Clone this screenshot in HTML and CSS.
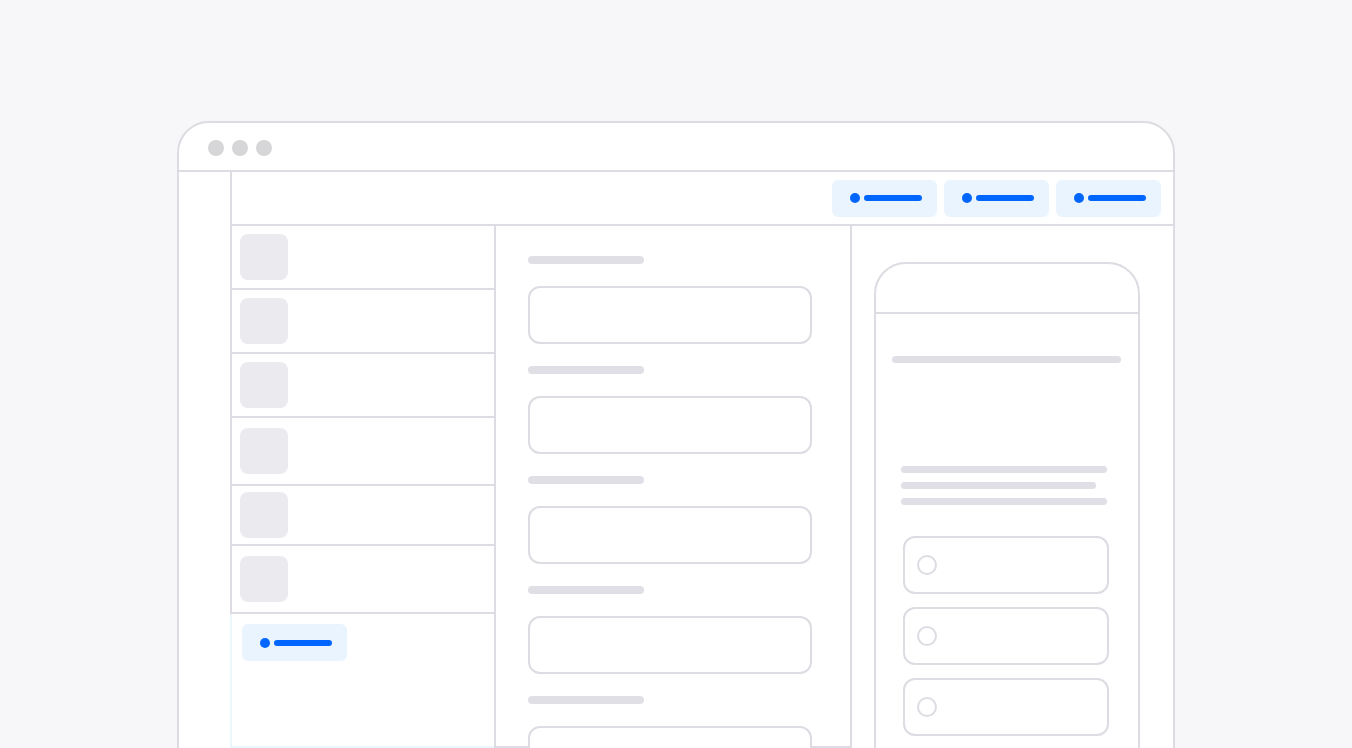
FILE: index.html
```html
<!DOCTYPE html>
<html lang="en">
<head>
  <meta charset="UTF-8" />
  <meta name="viewport" content="width=device-width, initial-scale=1.0"/>
  <title>Builder Wireframe</title>
  <link rel="stylesheet" href="styles.css">
</head>
<body>

  <div class="window">
    <div class="titlebar">
      <span class="light"></span>
      <span class="light"></span>
      <span class="light"></span>
    </div>

    <div class="window-body">
      <aside class="rail"></aside>

      <div class="workspace">
        <header class="toolbar">
          <span class="chip"><i class="chip-dot"></i><i class="chip-line"></i></span>
          <span class="chip"><i class="chip-dot"></i><i class="chip-line"></i></span>
          <span class="chip"><i class="chip-dot"></i><i class="chip-line"></i></span>
        </header>

        <div class="columns">
          <section class="list">
            <div class="row"><span class="thumb"></span></div>
            <div class="row"><span class="thumb"></span></div>
            <div class="row"><span class="thumb"></span></div>
            <div class="row row-tall"><span class="thumb"></span></div>
            <div class="row row-short"><span class="thumb"></span></div>
            <div class="row row-tall"><span class="thumb"></span></div>
            <div class="list-footer">
              <span class="chip"><i class="chip-dot"></i><i class="chip-line"></i></span>
            </div>
          </section>

          <section class="form">
            <div class="field"><span class="field-label"></span><span class="field-input"></span></div>
            <div class="field"><span class="field-label"></span><span class="field-input"></span></div>
            <div class="field"><span class="field-label"></span><span class="field-input"></span></div>
            <div class="field"><span class="field-label"></span><span class="field-input"></span></div>
            <div class="field"><span class="field-label"></span><span class="field-input"></span></div>
          </section>

          <section class="preview">
            <div class="phone">
              <div class="phone-header"></div>
              <div class="phone-body">
                <span class="phone-title"></span>
                <div class="phone-text">
                  <span class="text-line"></span>
                  <span class="text-line short"></span>
                  <span class="text-line"></span>
                </div>
                <div class="options">
                  <div class="option"><span class="radio"></span></div>
                  <div class="option"><span class="radio"></span></div>
                  <div class="option"><span class="radio"></span></div>
                </div>
              </div>
            </div>
          </section>
        </div>
      </div>
    </div>
  </div>

</body>
</html>
```

FILE: styles.css
```css
:root {
  --page: #f7f7f9;
  --line: #dcdce2;
  --soft-line: #ecf7fc;
  --fill: #ebebef;
  --bar: #dfdfe5;
  --blue: #0066ff;
  --blue-light: #eaf4ff;
  --light: #d6d6d8;
}

* {
  box-sizing: border-box;
  margin: 0;
  padding: 0;
}

html,
body {
  overflow: hidden;
}

body {
  font-family: 'Inter', sans-serif;
  background-color: var(--page);
  padding-top: 121px;
}

.window {
  width: 998px;
  margin: 0 auto;
  background-color: white;
  border: 2px solid var(--line);
  border-radius: 32px 32px 0 0;
}

/* title bar with the three window lights */
.titlebar {
  display: flex;
  gap: 8px;
  height: 49px;
  padding: 17px 0 0 29px;
  border-bottom: 2px solid var(--line);
}

.light {
  width: 16px;
  height: 16px;
  border-radius: 50%;
  background-color: var(--light);
}

.window-body {
  display: flex;
}

.rail {
  width: 51px;
  flex-shrink: 0;
}

.workspace {
  flex: 1;
}

.toolbar {
  display: flex;
  justify-content: flex-end;
  align-items: center;
  gap: 7px;
  height: 54px;
  padding-right: 12px;
  border-left: 2px solid var(--line);
  border-bottom: 2px solid var(--line);
}

.chip {
  display: flex;
  align-items: center;
  gap: 4px;
  width: 105px;
  height: 37px;
  padding-left: 18px;
  border-radius: 6px;
  background-color: var(--blue-light);
}

.chip-dot {
  width: 10px;
  height: 10px;
  border-radius: 50%;
  background-color: var(--blue);
}

.chip-line {
  width: 58px;
  height: 6px;
  border-radius: 3px;
  background-color: var(--blue);
}

.columns {
  display: flex;
  height: 522px;
}

/* left list of items */
.list {
  display: flex;
  flex-direction: column;
  width: 266px;
  border-right: 2px solid var(--line);
}

.row {
  display: flex;
  align-items: center;
  height: 64px;
  padding-left: 8px;
  border-left: 2px solid var(--line);
  border-bottom: 2px solid var(--line);
}

.row-tall {
  height: 68px;
}

.row-short {
  height: 60px;
}

.thumb {
  width: 48px;
  height: 46px;
  border-radius: 8px;
  background-color: var(--fill);
}

.list-footer {
  flex: 1;
  padding: 10px;
  border-left: 2px solid var(--soft-line);
  border-bottom: 2px solid var(--soft-line);
}

/* middle form */
.form {
  width: 356px;
  padding: 30px 0 0 32px;
  border-right: 2px solid var(--line);
  border-bottom: 2px solid var(--line);
}

.field {
  display: flex;
  flex-direction: column;
  gap: 22px;
  margin-bottom: 22px;
}

.field-label {
  width: 116px;
  height: 8px;
  border-radius: 4px;
  background-color: var(--bar);
}

.field-input {
  width: 284px;
  height: 58px;
  border: 2px solid var(--line);
  border-radius: 12px;
  background-color: white;
}

/* phone preview */
.preview {
  flex: 1;
  padding: 36px 0 0 22px;
}

.phone {
  width: 266px;
  height: 560px;
  border: 2px solid var(--line);
  border-radius: 32px 32px 0 0;
  background-color: white;
}

.phone-header {
  height: 50px;
  border-bottom: 2px solid var(--line);
}

.phone-body {
  display: flex;
  flex-direction: column;
}

.phone-title {
  height: 7px;
  margin: 42px 17px 0 16px;
  border-radius: 4px;
  background-color: var(--bar);
}

.phone-text {
  display: flex;
  flex-direction: column;
  gap: 9px;
  margin: 103px 0 0 25px;
}

.text-line {
  width: 206px;
  height: 7px;
  border-radius: 4px;
  background-color: var(--bar);
}

.text-line.short {
  width: 195px;
}

.options {
  display: flex;
  flex-direction: column;
  gap: 13px;
  margin: 31px 0 0 27px;
}

.option {
  display: flex;
  align-items: center;
  width: 206px;
  height: 58px;
  padding-left: 12px;
  border: 2px solid var(--line);
  border-radius: 12px;
}

.radio {
  width: 20px;
  height: 20px;
  border: 2px solid var(--line);
  border-radius: 50%;
}
```
